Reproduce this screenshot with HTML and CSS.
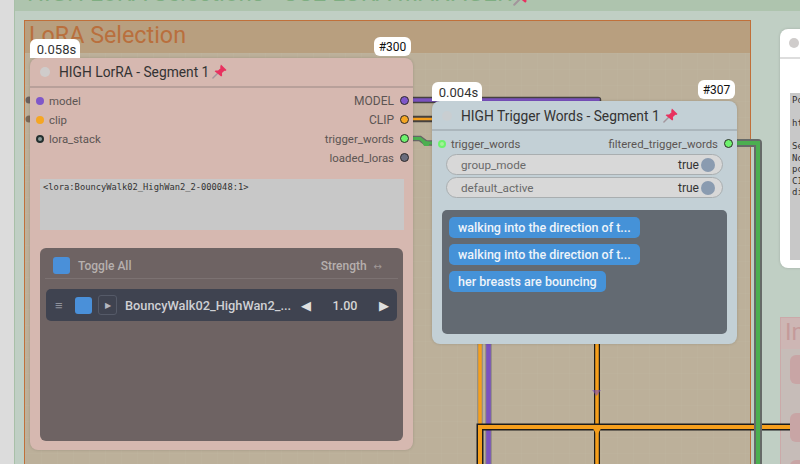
FILE: index.html
```html
<!DOCTYPE html>
<html lang="en">
<head>
<meta charset="utf-8">
<title>LoRA Selection</title>
<link rel="stylesheet" href="styles.css">
</head>
<body>
<svg width="0" height="0" class="defs">
  <symbol id="pin" viewBox="0 0 16 16">
    <path d="M6.600 9.400 1 15" stroke="#a3959c" stroke-width="1.600" stroke-linecap="round" fill="none"/>
    <path d="M9.500 .5 15.500 6.500l-1.300 1-1-.4-2.600 2.600.2 2.700-1 1L2.800 7.800l1-1 2.700.2 2.600-2.600-.4-1z" fill="#e8315f"/>
  </symbol>
</svg>
<main class="canvas">
  <div class="margin-strip"></div>
  <section class="group group-green">
    <h2 class="group-green-title">HIGH LoRA Selections - USE LORA MANAGER</h2>
    <svg class="title-pin"><use href="#pin"/></svg>
  </section>
  <section class="group group-orange"><h2 class="group-title">LoRA Selection</h2></section>
  <section class="group group-pink"><h2 class="group-pink-title">Input</h2></section>
  <div class="pink-tile tile-a"></div>
  <div class="pink-tile tile-b"></div>
  <div class="pink-tile tile-c"></div>

  <svg class="wires" width="800" height="464" viewBox="0 0 800 464">
    <circle cx="29" cy="100" r="3.500" fill="#6b625f"/>
    <circle cx="29" cy="119" r="3.500" fill="#7b6a58"/>
    <g fill="none">
      <path d="M488.500 340V464" stroke="#8d877f" stroke-width="6.500"/>
      <path d="M488.500 340V464" stroke="#7a52bf" stroke-width="4.500"/>
      <path d="M480 340V427" stroke="#8d877f" stroke-width="5.500"/>
      <path d="M480 340V427" stroke="#f59f1d" stroke-width="3.500"/>
      <path d="M408 100H598V130" stroke="#45413f" stroke-width="6.500" stroke-linejoin="round"/>
      <path d="M408 100H598V130" stroke="#7a52bf" stroke-width="3.500"/>
      <path d="M408 119H440" stroke="#45413f" stroke-width="6.500"/>
      <path d="M408 119H440" stroke="#f59f1d" stroke-width="2.500"/>
      <path d="M597 340V464" stroke="#1c1c1c" stroke-width="6"/>
      <path d="M597 340V464" stroke="#f59f1d" stroke-width="3.500"/>
      <path d="M480 464V427H790" stroke="#1c1c1c" stroke-width="7"/>
      <path d="M480 464V427H790" stroke="#f59f1d" stroke-width="4"/>
      <path d="M408 138.500H420L426 143H434" stroke="#666" stroke-width="5.500"/>
      <path d="M408 138.500H420L426 143H434" stroke="#4caf50" stroke-width="3"/>
      <path d="M730 143H758V464" stroke="#666a68" stroke-width="8" stroke-linejoin="round"/>
      <path d="M730 143H758V464" stroke="#4caf50" stroke-width="4"/>
    </g>
    <path d="M592 427h10l-5 8z" fill="#f59f1d"/>
    <path d="M592 390h9l-4.500 6z" fill="#7a52bf" opacity=".6"/>
    <path d="M421 140l8 2v4h-5z" fill="#4caf50"/>
  </svg>

  <article class="node node-lora">
    <span class="badge badge-left">0.058s</span>
    <span class="badge badge-right">#300</span>
    <header class="node-head">
      <i class="status"></i>
      <h3 class="node-title">HIGH LorRA - Segment 1</h3>
      <svg class="pin"><use href="#pin"/></svg>
    </header>
    <div class="slots">
      <div class="slot-col">
        <div class="slot"><i class="dot dot-purple"></i>model</div>
        <div class="slot"><i class="dot dot-orange"></i>clip</div>
        <div class="slot"><i class="dot dot-stack"></i>lora_stack</div>
      </div>
      <div class="slot-col slot-col-right">
        <div class="slot slot-caps">MODEL<i class="dot dot-purple dot-ring"></i></div>
        <div class="slot slot-caps">CLIP<i class="dot dot-orange dot-ring"></i></div>
        <div class="slot">trigger_words<i class="dot dot-green dot-ring"></i></div>
        <div class="slot">loaded_loras<i class="dot dot-grey dot-ring"></i></div>
      </div>
    </div>
    <div class="textbox">&lt;lora:BouncyWalk02_HighWan2_2-000048:1&gt;</div>
    <div class="lora-panel">
      <div class="lora-top">
        <i class="check"></i>
        <span class="toggle-all">Toggle All</span>
        <span class="strength">Strength <span class="strength-arrow">↔</span></span>
      </div>
      <div class="lora-row">
        <span class="handle">≡</span>
        <i class="check"></i>
        <span class="expand">▶</span>
        <span class="lora-name">BouncyWalk02_HighWan2_...</span>
        <span class="arrow">◀</span>
        <span class="value">1.00</span>
        <span class="arrow">▶</span>
      </div>
    </div>
  </article>

  <article class="node node-trigger">
    <span class="badge badge-left">0.004s</span>
    <span class="badge badge-right">#307</span>
    <header class="node-head">
      <i class="status status-faint"></i>
      <h3 class="node-title">HIGH Trigger Words - Segment 1</h3>
      <svg class="pin"><use href="#pin"/></svg>
    </header>
    <div class="trigger-slots">
      <div class="slot"><i class="dot dot-green dot-soft"></i>trigger_words</div>
      <div class="slot">filtered_trigger_words<i class="dot dot-green dot-ring"></i></div>
    </div>
    <div class="pill"><span>group_mode</span><b class="pill-val">true</b><i class="knob"></i></div>
    <div class="pill"><span>default_active</span><b class="pill-val">true</b><i class="knob"></i></div>
    <div class="chips">
      <span class="chip">walking into the direction of t...</span>
      <span class="chip">walking into the direction of t...</span>
      <span class="chip">her breasts are bouncing</span>
    </div>
  </article>

  <article class="node node-note">
    <header class="note-head"><i class="status"></i></header>
    <pre class="note-text">Po

ht

Se
No
po
CI
di</pre>
  </article>
</main>
</body>
</html>
```
FILE: styles.css
```css
* { box-sizing: border-box; }
html, body { margin: 0; padding: 0; }
body { width: 800px; height: 464px; overflow: hidden; font-family: Roboto, "Liberation Sans", sans-serif; }
.defs { position: absolute; }
.canvas { position: relative; width: 800px; height: 464px; overflow: hidden; background: #c0cfc4; }
.margin-strip { position: absolute; left: 0; top: 0; width: 15px; height: 464px; background: #dcdcdc; border-right: 1px solid #a8c0a8; }

.group { position: absolute; }
.group-green { left: 15px; top: 0; width: 785px; height: 11px; background: #aec4ae; overflow: hidden; }
.group-green-title { margin: -21px 0 0 12px; font-size: 24px; line-height: 28px; font-weight: 400; color: #7fae82; white-space: nowrap; }
.title-pin { position: absolute; left: 498px; top: -14px; width: 20px; height: 20px; }
.group-orange { left: 24px; top: 20px; width: 727px; height: 460px; background-color: #bcb09a; background-image: linear-gradient(rgba(255, 255, 255, .02) 1px, transparent 1px), linear-gradient(90deg, rgba(255, 255, 255, .02) 1px, transparent 1px); background-size: 16px 16px; border: 1px solid #c0703a; }
.group-title { margin: 0; height: 32px; background: #b89f7f; padding-left: 4px; font-size: 23.300px; line-height: 29px; font-weight: 400; color: #b96f3d; }
.group-pink { left: 780px; top: 317px; width: 60px; height: 160px; background: #c6bcb8; border: 1px solid #cba9a9; }
.group-pink-title { margin: 0; height: 31px; background: #cdb6b4; padding-left: 4px; font-size: 24px; line-height: 29px; font-weight: 400; color: #c49a9a; white-space: nowrap; }
.pink-tile { position: absolute; left: 790px; width: 40px; height: 29px; border-radius: 6px; background: #c8a5a5; }
.tile-a { top: 355px; }
.tile-b { top: 413px; }
.tile-c { top: 460px; }

.wires { position: absolute; left: 0; top: 0; }

.node { position: absolute; border-radius: 8px; box-shadow: 0 0 3px rgba(0, 0, 0, .16); }
.node-lora { left: 30px; top: 58px; width: 383px; height: 392px; background: #d6b8b0; }
.node-trigger { left: 432px; top: 101px; width: 305px; height: 243px; background: #c3d0d6; }
.node-note { left: 780px; top: 29px; width: 60px; height: 239px; background: #fff; }

.badge { position: absolute; bottom: 100%; height: 19px; background: #fff; border-radius: 6px 6px 0 0; font-size: 13px; line-height: 21px; color: #333; text-align: center; }
.badge-left { left: 0; width: 50px; padding-left: 3px; }
.badge-right { right: 2px; width: 37px; margin-bottom: 2px; border-radius: 6px; color: #111; font-size: 12px; }

.node-head { display: flex; align-items: center; height: 30px; padding: 0 0 1px 10px; border-bottom: 2px solid #b8a09a; }
.node-trigger .node-head { padding: 1px 0 0 10px; border-bottom-color: #abb6bc; }
.status { width: 10px; height: 10px; border-radius: 50%; background: #cfcccb; flex: none; }
.status-faint { background: #c9ced1; }
.node-title { margin: 0 0 0 9px; font-size: 13.800px; line-height: 16px; font-weight: 400; color: #333; white-space: nowrap; }
.pin { width: 15px; height: 15px; margin-left: 3px; flex: none; }

.slots { display: flex; justify-content: space-between; padding: 3px 4px 0 6px; height: 91px; }
.slot-col { display: flex; flex-direction: column; }
.slot-col-right { align-items: flex-end; }
.slot { display: flex; align-items: center; gap: 5px; height: 19px; font-size: 11.400px; color: #5c5553; white-space: nowrap; }
.slot-caps { font-size: 12px; }
.dot { width: 8px; height: 8px; border-radius: 50%; flex: none; }
.dot-ring { width: 9px; height: 9px; border: 1px solid #2e2a2a; margin-left: 1px; }
.dot-purple { background: #7f57c9; }
.dot-orange { background: #f5a623; }
.dot-stack { background: #8a9a98; border: 2px solid #25302f; }
.dot-green { background: #6df26d; }
.dot-grey { background: #6a6c7c; }
.dot-soft { background: #a5f09a; border: 2px solid #6df26d; }

.textbox { margin: 0 9px 0 10px; height: 51px; padding: 2px 3px; background: #c8c8c8; font-family: "DejaVu Sans Mono", monospace; font-size: 8.750px; line-height: 12px; color: #333; white-space: nowrap; overflow: hidden; }

.lora-panel { margin: 18px 10px 0; height: 193px; padding: 0 5px; background: #6e6363; border-radius: 6px; }
.lora-top { display: flex; align-items: center; height: 31px; padding: 5px 16px 0 8px; border-bottom: 1px solid #7c7272; }
.check { width: 17px; height: 17px; border-radius: 3px; background: #4a90d9; flex: none; }
.lora-top .check { margin-top: -1px; }
.toggle-all { margin-left: 8px; font-size: 12px; font-weight: 500; color: #b6b0ae; }
.strength { margin-left: auto; font-size: 12px; font-weight: 500; color: #b6b0ae; }
.strength-arrow { margin-left: 4px; font-family: "DejaVu Sans", sans-serif; font-size: 10px; font-weight: 400; color: #a09896; }
.lora-row { display: flex; align-items: center; height: 32px; margin: 10px 1px 0; padding: 0 8px 0 9px; background: #3f4350; border-radius: 5px; }
.handle { width: 20px; font-size: 13px; color: #8f929c; }
.expand { display: flex; align-items: center; justify-content: center; width: 19px; height: 20px; margin-left: 6px; border: 1px solid #555a68; border-radius: 3px; font-size: 8px; color: #b5b8c0; flex: none; }
.lora-name { width: 176px; margin-left: 8px; font-size: 12.800px; font-weight: 500; color: #cfd0d4; white-space: nowrap; }
.arrow { font-family: "DejaVu Sans", sans-serif; font-size: 13px; color: #e0e0e0; }
.value { width: 68px; text-align: center; font-size: 12.500px; font-weight: 500; color: #d5d5d5; }

.trigger-slots { display: flex; justify-content: space-between; height: 23px; padding: 3px 4px 0 6px; }
.pill { display: flex; align-items: center; height: 21px; margin: 0 14px 2px; padding: 0 7px 0 14px; background: #d8d8d8; border: 1.500px solid #a9aeb0; border-radius: 11px; font-size: 11.700px; color: #6a6a6a; }
.pill-val { margin-left: auto; font-size: 12px; font-weight: 400; color: #333; }
.knob { width: 14px; height: 14px; margin-left: 2px; border-radius: 50%; background: #8a9bb0; flex: none; }
.chips { display: flex; flex-direction: column; align-items: flex-start; gap: 6px; height: 124px; margin: 12px 10px 0; padding: 7px; background: #636a72; border-radius: 5px; }
.chip { height: 21px; padding: 0 9px; background: #4592d8; border-radius: 5px; font-size: 12.500px; line-height: 21px; font-weight: 500; color: #eef4fa; white-space: nowrap; }

.note-head { display: flex; align-items: center; height: 30px; padding-left: 9px; border-bottom: 2px solid #ddd; }
.note-text { margin: 34px 0 0 10px; height: 167px; padding: 2px 2px; background: #c8c8c8; font-family: "DejaVu Sans Mono", monospace; font-size: 9px; line-height: 11.500px; color: #333; }
```
